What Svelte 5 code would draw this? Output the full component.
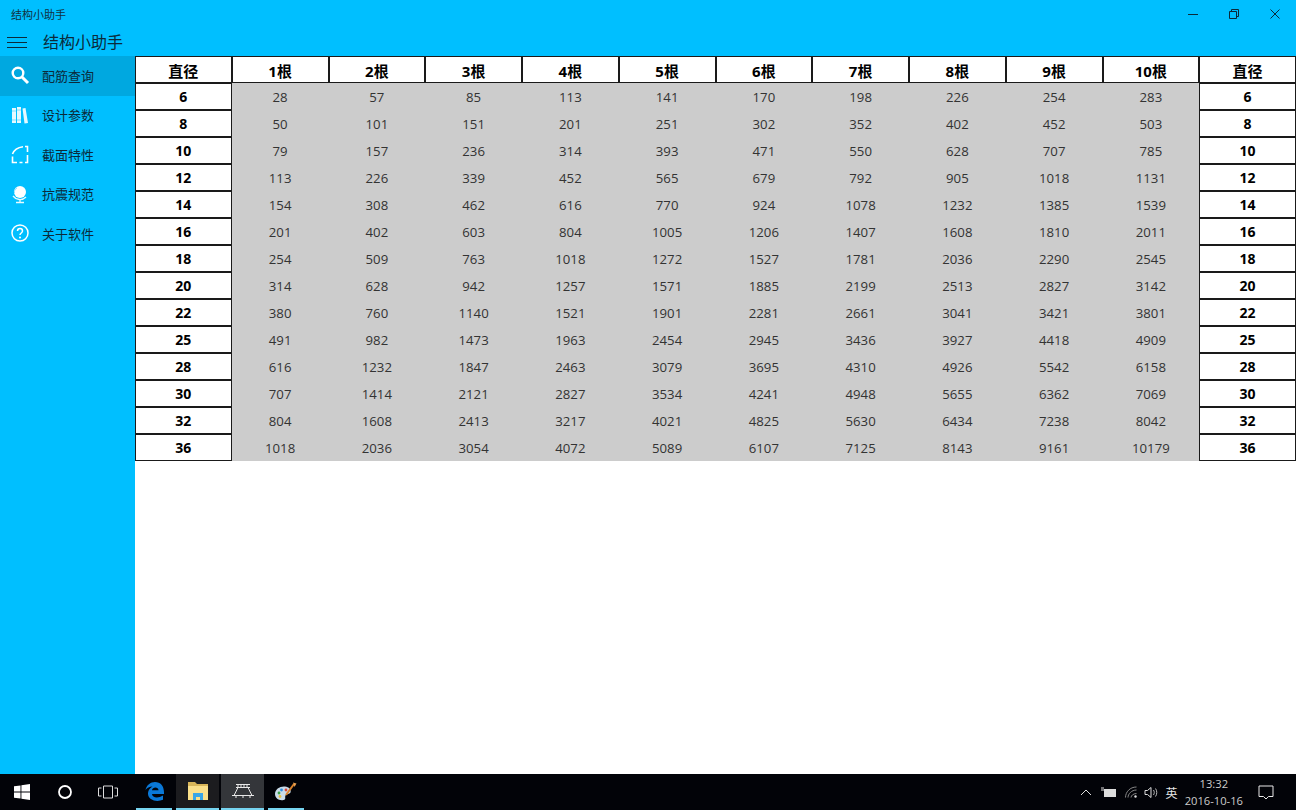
<script>
	const diameters = [6, 8, 10, 12, 14, 16, 18, 20, 22, 25, 28, 30, 32, 36];
	const counts = [1, 2, 3, 4, 5, 6, 7, 8, 9, 10];
	const nav = ['配筋查询', '设计参数', '截面特性', '抗震规范', '关于软件'];

	function area(d, n) {
		return Math.round((Math.PI * d * d * n) / 4);
	}
</script>

<div class="screen">
	<header class="titlebar">
		<div class="caption">
			<span class="caption-text">结构小助手</span>
			<div class="winbtns">
				<svg width="10" height="10" viewBox="0 0 10 10"><path d="M0 5.500h10" stroke="#0b2a3a" fill="none" /></svg>
				<svg width="10" height="10" viewBox="0 0 10 10"><path d="M.5 2.500h7v7h-7zM2.500 2.500v-2h7v7h-2" stroke="#0b2a3a" fill="none" /></svg>
				<svg width="10" height="10" viewBox="0 0 10 10"><path d="M.5 .5l9 9M9.500 .5l-9 9" stroke="#0b2a3a" fill="none" /></svg>
			</div>
		</div>
		<div class="apphead">
			<svg class="burger" width="20" height="11" viewBox="0 0 20 11"><path d="M0 .5h20M0 5.500h20M0 10.500h20" stroke="#0b2a3a" fill="none" /></svg>
			<span class="apptitle">结构小助手</span>
		</div>
	</header>

	<div class="body">
		<nav class="side">
			{#each nav as label, i}
				<div class="item" class:active={i === 0}>
					<span class="ico">
						{#if i === 0}
							<svg width="20" height="20" viewBox="0 0 20 20"><circle cx="8" cy="8" r="5.300" fill="none" stroke="#fff" stroke-width="2.400" /><path d="M12 12l6 6" stroke="#fff" stroke-width="3" /></svg>
						{:else if i === 1}
							<svg width="20" height="20" viewBox="0 0 20 20"><path d="M2 3h4v15H2zM7 2h4v16H7zM12.500 3.500l3-.5 2.500 15-3.500.5z" fill="#fff" opacity=".9" /><path d="M2 6h4M7 5h4M2 15h4M7 15h4" stroke="#7fdfff" /></svg>
						{:else if i === 2}
							<svg width="20" height="20" viewBox="0 0 20 20"><path d="M2.500 10C4 6 8 3.500 13 2.800" fill="none" stroke="#fff" stroke-width="1.600" /><path d="M15 2.500h2.500V8M17.500 11v7.500h-2.500M12.500 18.500h-3M7 18.500H2.500V12.500" fill="none" stroke="#fff" stroke-width="1.600" /></svg>
						{:else if i === 3}
							<svg width="20" height="20" viewBox="0 0 20 20"><circle cx="10" cy="8" r="6" fill="#fff" /><path d="M7 4c-2 1-3 3-2.500 5" stroke="#8fe3ff" fill="none" /><path d="M3 12c3 4 9 5 13 1M10 16v2M6 18.500h8" stroke="#e8fbff" stroke-width="1.300" fill="none" /></svg>
						{:else}
							<svg width="20" height="20" viewBox="0 0 20 20"><circle cx="10" cy="10" r="8" fill="none" stroke="#fff" stroke-width="1.500" /><path d="M7.500 8c0-3.300 5-3.300 5 0 0 2-2.500 2-2.500 4" fill="none" stroke="#fff" stroke-width="1.500" /><circle cx="10" cy="14.500" r="1" fill="#fff" /></svg>
						{/if}
					</span>
					<span>{label}</span>
				</div>
			{/each}
		</nav>

		<main class="content">
			<div class="table">
				<div class="cell head">直径</div>
				{#each counts as n}
					<div class="cell head">{n}根</div>
				{/each}
				<div class="cell head">直径</div>

				{#each diameters as d}
					<div class="cell side-cell">{d}</div>
					{#each counts as n}
						<div class="val">{area(d, n)}</div>
					{/each}
					<div class="cell side-cell">{d}</div>
				{/each}
			</div>
		</main>
	</div>

	<footer class="taskbar">
		<div class="tb-left">
			<span class="tb-btn start">
				<svg width="16" height="16" viewBox="0 0 16 16"><path d="M0 2.300l6.500-.9v6.200H0zM7.400 1.300L16 0v7.600H7.400zM0 8.400h6.500v6.200L0 13.700zM7.400 8.400H16V16l-8.600-1.300z" fill="#fff" /></svg>
			</span>
			<span class="tb-btn circle">
				<svg width="16" height="16" viewBox="0 0 16 16"><circle cx="8" cy="8" r="6" fill="none" stroke="#fff" stroke-width="1.800" /></svg>
			</span>
			<span class="tb-btn view">
				<svg width="20" height="14" viewBox="0 0 20 14"><path d="M5.500 1h9v12h-9zM3.500 3H.5v8h3M16.500 3h3v8h-3" fill="none" stroke="#ddd" /></svg>
			</span>
			<span class="app pinned edge">
				<svg width="19" height="19" viewBox="0 0 19 19"><path d="M.5 8C1.500 3 5.500 0 10 0c5.500 0 9 4 9 10.500v1.500H7c.3 4 6.500 4.500 11 1.500v4.300C12 20.500 2.500 18.500 3 11c.2-3 2-5 4.500-6.500C4.500 4.500 2 6 .5 8zM7 8.300h6.500C13.500 4.500 7.500 4.500 7 8.300z" fill="#0a78d7" /></svg>
			</span>
			<span class="app pinned folder">
				<svg width="20" height="18" viewBox="0 0 20 18"><path d="M0 0h7l2 2h11v6H0z" fill="#d9b65a" /><path d="M0 4h20v14H0z" fill="#fbe08a" /><path d="M5 18v-7h10v7h-3v-3H8v3z" fill="#3aa6e6" /></svg>
			</span>
			<span class="app pinned current">
				<svg width="24" height="16" viewBox="0 0 24 16"><path d="M5 1.500h14M5 4.500h14M1 12.500h22M7 4.500L3 12.500M17 4.500l4 8M7 1.500v3M10 1.500v3M13 1.500v3M16 1.500v3M5 12.500v2.500M12 12.500v2.500M19 12.500v2.500" stroke="#e8e8e8" fill="none" /></svg>
			</span>
			<span class="app pinned paint">
				<svg width="22" height="21" viewBox="0 0 22 21"><path d="M0 13C0 8 5 5 10 5.500c4 .5 6.500 3 5.500 6-1 2-4 1-5 3s1 4-2 4.500C4 20 0 17 0 13z" fill="#c9dbe8" /><circle cx="4" cy="12" r="1.400" fill="#38a048" /><circle cx="6.500" cy="9" r="1.400" fill="#2b8fe0" /><circle cx="11" cy="9" r="1.400" fill="#d8443c" /><circle cx="5" cy="15.500" r="1.400" fill="#e8c040" /><path d="M11 14L19 3" stroke="#d9822b" stroke-width="2" /><path d="M18 1.500l3.500 1-2 3.500z" fill="#e8a050" /></svg>
			</span>
		</div>
		<div class="tray">
			<svg class="t chev" width="12" height="7" viewBox="0 0 12 7"><path d="M1 6l5-5 5 5" stroke="#ddd" fill="none" /></svg>
			<svg class="t batt" width="16" height="12" viewBox="0 0 16 12"><path d="M0 2h3M0 4h3" stroke="#ddd" /><rect x="3" y="3" width="12" height="8" fill="#ddd" /></svg>
			<svg class="t wifi" width="12" height="12" viewBox="0 0 12 12"><path d="M.5 11.500C.5 6 5 1 11.500 1M3 11.500C3 8 6.500 4 11.500 4M6 11.500c0-2 2.500-4 5.500-4" stroke="#888" fill="none" /><circle cx="10.500" cy="10.500" r="1.200" fill="#ddd" /></svg>
			<svg class="t spk" width="15" height="13" viewBox="0 0 15 13"><path d="M1 4.500h2.500L7 1.500v10l-3.500-3H1z" stroke="#ddd" fill="none" /><path d="M9.500 4c1 1.500 1 3.500 0 5M11.500 2.500c1.700 2.300 1.700 5.700 0 8" stroke="#bbb" fill="none" /></svg>
			<span class="ime">英</span>
			<div class="clock"><span>13:32</span><span>2016-10-16</span></div>
			<svg class="note" width="16" height="15" viewBox="0 0 16 15"><path d="M1 1h14v10.500h-4.500L8 14l-2.500-2.500H1z" stroke="#e8e8e8" fill="none" /></svg>
		</div>
	</footer>
</div>

<style>
	:global(body) {
		margin: 0;
	}
	.screen {
		width: 1296px;
		height: 810px;
		display: flex;
		flex-direction: column;
		overflow: hidden;
		font-family: "Open Sans", "Noto Sans CJK SC", sans-serif;
		color: #111;
		background: #fff;
	}
	.titlebar {
		height: 56px;
		flex: none;
		background: #00bfff;
	}
	.caption {
		height: 28px;
		display: flex;
		align-items: center;
		justify-content: space-between;
		padding-left: 11px;
		font-size: 11px;
		color: #12313f;
	}
	.caption-text {
		font-family: "Noto Sans CJK SC", sans-serif;
	}
	.winbtns {
		display: flex;
		gap: 31px;
		padding-right: 16px;
	}
	.winbtns svg {
		display: block;
	}
	.apphead {
		height: 28px;
		display: flex;
		align-items: center;
		gap: 16px;
		padding-left: 7px;
		padding-bottom: 2px;
		box-sizing: border-box;
	}
	.burger {
		display: block;
		margin-top: 3px;
	}
	.apptitle {
		font-size: 16px;
		font-family: "Noto Sans CJK SC", sans-serif;
		color: #0b2a3a;
	}
	.body {
		flex: 1;
		display: flex;
		min-height: 0;
	}
	.side {
		width: 135px;
		flex: none;
		background: #00bfff;
	}
	.item {
		height: 39.500px;
		display: flex;
		align-items: center;
		gap: 12px;
		padding-left: 10px;
		padding-bottom: 1px;
		box-sizing: border-box;
		font-size: 13px;
		font-family: "Noto Sans CJK SC", sans-serif;
		color: #0b2a3a;
	}
	.item.active {
		background: #00a8e0;
	}
	.ico {
		width: 20px;
		height: 20px;
		display: block;
	}
	.ico svg {
		display: block;
	}
	.content {
		flex: 1;
		min-width: 0;
	}
	.table {
		display: grid;
		grid-template-columns: repeat(12, 1fr);
		grid-auto-rows: 27px;
		background: #cccccc;
	}
	.cell {
		background: #fff;
		border: 1px solid #1a1a1a;
		display: flex;
		align-items: center;
		justify-content: center;
		font-weight: 700;
		font-size: 14px;
		color: #000;
	}
	.head {
		font-size: 15px;
		font-weight: 700;
		padding-top: 1px;
		box-sizing: border-box;
	}
	.side-cell {
		box-sizing: border-box;
	}
	.val {
		display: flex;
		align-items: center;
		justify-content: center;
		font-size: 13.200px;
		color: #333;
	}
	.taskbar {
		height: 36px;
		flex: none;
		background: #020308;
		display: flex;
		align-items: stretch;
		justify-content: space-between;
	}
	.tb-left {
		display: flex;
		align-items: stretch;
	}
	.tb-btn {
		display: flex;
		align-items: center;
		justify-content: center;
	}
	.start {
		width: 43px;
	}
	.circle {
		width: 43px;
	}
	.view {
		width: 44px;
	}
	.app {
		display: flex;
		align-items: center;
		justify-content: center;
		box-sizing: border-box;
	}
	.pinned {
		border-bottom: 2px solid #76d4f0;
	}
	.edge {
		width: 36px;
		margin: 0 4px 0 6px;
	}
	.folder {
		width: 43px;
		background: #1c1c1f;
		margin-right: 2px;
	}
	.current {
		width: 43px;
		background: #34363a;
		margin-right: 4px;
	}
	.paint {
		width: 36px;
	}
	.tray {
		display: flex;
		align-items: center;
		color: #e6e6e6;
		padding-right: 22px;
	}
	.chev {
		margin-right: 9px;
	}
	.batt {
		margin-right: 8px;
	}
	.wifi {
		margin-right: 7px;
	}
	.spk {
		margin-right: 7px;
	}
	.ime {
		font-family: "Noto Sans CJK SC", sans-serif;
		font-size: 12px;
		margin-right: 7px;
	}
	.clock {
		display: flex;
		flex-direction: column;
		align-items: center;
		font-size: 11.200px;
		line-height: 17px;
		margin-right: 15px;
		color: #ccc;
	}
	.note {
		display: block;
	}
</style>
